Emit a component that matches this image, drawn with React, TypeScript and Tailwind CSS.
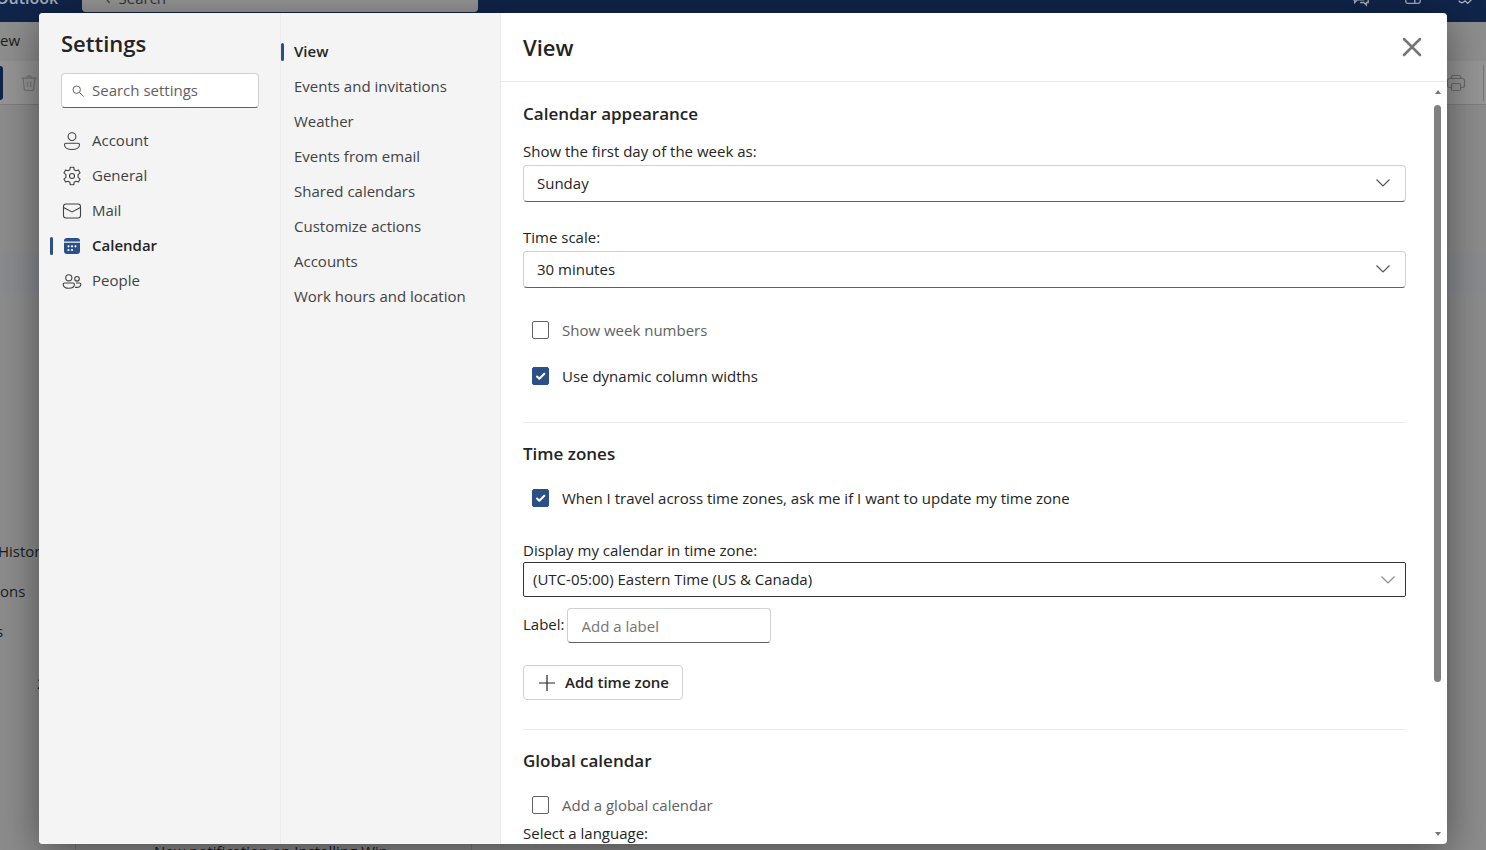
import { useState } from 'react'
import type { ReactNode } from 'react'
import clsx from 'clsx'

const sections = ['Account', 'General', 'Mail', 'Calendar', 'People']

const pages = [
  'View',
  'Events and invitations',
  'Weather',
  'Events from email',
  'Shared calendars',
  'Customize actions',
  'Accounts',
  'Work hours and location',
]

function SectionIcon({ name }: { name: string }) {
  const props = {
    viewBox: '0 0 20 20',
    className: 'w-5 h-5 shrink-0',
    fill: 'none',
    stroke: 'currentColor',
    strokeWidth: 1.1,
    'aria-hidden': true,
  }
  if (name === 'Account') {
    return (
      <svg {...props}>
        <circle cx="10" cy="5.6" r="3.9" />
        <path d="M4 12.2h12a1.5 1.5 0 0 1 1.5 1.5c0 2.9-3.2 4.8-7.5 4.8s-7.5-1.9-7.5-4.8A1.5 1.5 0 0 1 4 12.2z" />
      </svg>
    )
  }
  if (name === 'General') {
    return (
      <svg {...props} strokeLinejoin="round">
        <circle cx="10" cy="10" r="2.5" />
        <path d="M8.3 1.2h3.4l.5 2.6 1.7 1 2.5-.9 1.7 3-2 1.7v2.8l2 1.7-1.7 3-2.5-.9-1.7 1-.5 2.6H8.3l-.5-2.6-1.7-1-2.5.9-1.7-3 2-1.7V8.6l-2-1.7 1.7-3 2.5.9 1.7-1z" />
      </svg>
    )
  }
  if (name === 'Mail') {
    return (
      <svg {...props}>
        <rect x="1.5" y="3" width="17" height="14" rx="2.5" />
        <path d="M1.5 6.5 10 11l8.5-4.5" />
      </svg>
    )
  }
  if (name === 'Calendar') {
    return (
      <svg {...props} stroke="none">
        <path fill="#2b4f87" d="M2 5a3 3 0 0 1 3-3h10a3 3 0 0 1 3 3v.5H2zM2 6.700h16V15a3 3 0 0 1-3 3H5a3 3 0 0 1-3-3z" />
        <g fill="#fff">
          <circle cx="6.5" cy="10.3" r="1.1" />
          <circle cx="10" cy="10.3" r="1.1" />
          <circle cx="13.5" cy="10.3" r="1.1" />
          <circle cx="6.5" cy="14" r="1.1" />
          <circle cx="10" cy="14" r="1.1" />
        </g>
      </svg>
    )
  }
  return (
    <svg {...props}>
      <circle cx="6.8" cy="6.8" r="3.1" />
      <circle cx="15" cy="7.8" r="2.3" />
      <path d="M2.5 12h8.600a1.300 1.300 0 0 1 1.300 1.300c0 2.400-2.300 4-5.600 4s-5.600-1.600-5.600-4A1.300 1.300 0 0 1 2.500 12z" />
      <path d="M14 12h3.500a1.300 1.300 0 0 1 1.300 1.300c0 1.900-1.600 3.100-4.200 3.100-.6 0-1.100-.1-1.600-.2" />
    </svg>
  )
}

function SelectField({ id, label, value, outlined }: { id: string; label: string; value: string; outlined?: boolean }) {
  return (
    <div className={clsx('flex flex-col', outlined ? 'gap-0.5' : 'gap-1')}>
      <label htmlFor={id} className="leading-5">{label}</label>
      <div className="relative">
        <select
          id={id}
          className={clsx(
            'block w-full appearance-none bg-white',
            outlined
              ? 'h-[35px] px-[9px] border border-[#333] rounded-xs'
              : 'h-[37px] px-[13px] border border-[#d1d1d1] border-b-[#616161] rounded',
          )}
        >
          <option>{value}</option>
        </select>
        <svg
          viewBox="0 0 16 16"
          className={clsx(
            'absolute w-4 h-4 top-2.5 pointer-events-none',
            outlined ? 'right-2.5 text-[#8a8a8a]' : 'right-[15px] text-[#555]',
          )}
          fill="none"
          stroke="currentColor"
          strokeWidth="1.2"
          aria-hidden="true"
        >
          <path d="M1.5 4.5 8 11l6.5-6.5" />
        </svg>
      </div>
    </div>
  )
}

function CheckRow({ label, initial = false }: { label: string; initial?: boolean }) {
  const [checked, setChecked] = useState(initial)
  return (
    <label className={clsx('flex items-center h-9 gap-[13px] pl-[9px]', !checked && 'text-[#616161]')}>
      <span className="relative flex">
        <input
          type="checkbox"
          checked={checked}
          onChange={e => setChecked(e.target.checked)}
          className="w-[17px] h-[18px] appearance-none rounded-xs border border-[#616161] bg-white checked:bg-[#2b4f87] checked:border-[#2b4f87]"
        />
        {checked && (
          <svg viewBox="0 0 17 18" className="absolute inset-0 pointer-events-none" fill="none" stroke="#fff" strokeWidth="2" strokeLinecap="round" strokeLinejoin="round" aria-hidden="true">
            <path d="m5 9.5 2.300 2.300 5-5" />
          </svg>
        )}
      </span>
      {label}
    </label>
  )
}

function NavItem({ label, active, icon, onClick }: { label: string; active: boolean; icon?: ReactNode; onClick: () => void }) {
  return (
    <li className="flex items-center">
      <span className={clsx('w-[3px] h-[18px] rounded-sm', active && 'bg-[#2b4f87]')} />
      <button
        type="button"
        onClick={onClick}
        className={clsx(
          'flex items-center h-[35px] gap-2.5 text-left',
          icon ? 'pl-[9px]' : 'pl-2.5',
          active ? 'font-semibold text-[#242424]' : 'text-[#424242]',
        )}
      >
        {icon}
        {label}
      </button>
    </li>
  )
}

// Mailbox behind the dialog, already in its dimmed colours
function Backdrop() {
  return (
    <div className="h-full flex flex-col bg-[#8c8c8c] text-[#1c1c1c]" aria-hidden="true">
      <header className="h-12 -mt-[26px] shrink-0 flex items-center bg-[#10254a] text-[#a5adba]">
        <span className="w-[86px] shrink-0 -ml-1 text-base font-semibold">Outlook</span>
        <div className="w-[396px] h-7 flex items-center gap-2 pl-6 rounded-b bg-[#959595] text-[#333]">
          <span>‹</span>
          <span>Search</span>
        </div>
        <div className="ml-auto flex gap-[34px] pr-3">
          <svg viewBox="0 0 20 20" className="w-[18px] h-[18px]" fill="none" stroke="currentColor" strokeWidth="1.5">
            <path d="M2 3h11v9H6l-3 3v-3H2zM15 7h3v8h-2v3l-3-3H9" />
          </svg>
          <svg viewBox="0 0 20 20" className="w-[18px] h-[18px]" fill="none" stroke="currentColor" strokeWidth="1.5">
            <rect x="2" y="2" width="16" height="14" rx="2" />
            <path d="M12 16v-5h6" />
          </svg>
          <svg viewBox="0 0 20 20" className="w-[18px] h-[18px]" fill="none" stroke="currentColor" strokeWidth="1.5">
            <path d="M3 13c2 3 5 3 7 0M10 13l3 3 5-5M10 2v9" />
          </svg>
        </div>
      </header>
      <div className="h-[39px] shrink-0 leading-9 bg-[#8e8e8e]">ew</div>
      <div className="h-11 shrink-0 flex items-center justify-between bg-[#959595] border-b border-[#7c7c7c]">
        <div className="flex items-center gap-[17px]">
          <span className="w-[3px] h-[34px] rounded-r bg-[#10254a]" />
          <svg viewBox="0 0 20 20" className="w-[18px] h-5" fill="none" stroke="#747474" strokeWidth="1.3">
            <path d="M1.5 4.5h17M7.5 4.5a2.5 2.5 0 0 1 5 0M3.5 4.5l1.2 12a2 2 0 0 0 2 1.8h6.600a2 2 0 0 0 2-1.800l1.200-12M8.200 8.500v6M11.800 8.500v6" />
          </svg>
        </div>
        <div className="flex items-center gap-[17px]">
          <svg viewBox="0 0 20 20" className="w-5 h-5" fill="none" stroke="#6b6b6b" strokeWidth="1.2">
            <path d="M5.5 5.5V4A1.5 1.5 0 0 1 7 2.5h6A1.5 1.5 0 0 1 14.5 4v1.5M5.5 14.5h-2a2 2 0 0 1-2-2V8A2.5 2.5 0 0 1 4 5.5h12A2.5 2.5 0 0 1 18.5 8v4.5a2 2 0 0 1-2 2h-2" />
            <rect x="5.5" y="10.5" width="9" height="7" rx="1.5" />
          </svg>
          <span className="w-px h-9 mr-0.5 bg-[#777]" />
        </div>
      </div>
      <div className="flex-1 min-h-0 flex flex-col overflow-hidden">
        <div className="h-10 mt-[148px] shrink-0 bg-[#8a8b8f]" />
        <div className="mt-[238px] h-10 shrink-0 -ml-0.5 leading-10">History</div>
        <div className="h-10 shrink-0 leading-10">ons</div>
        <div className="h-10 shrink-0 -ml-1 leading-10">s</div>
        <div className="h-10 shrink-0 pl-[37px] mt-3 leading-10">2</div>
        <div className="mt-[136px] shrink-0 w-[397px] pl-[78px] ml-[75px] leading-6 border-x border-[#7a7a7a]">New notification on Installing Win</div>
      </div>
    </div>
  )
}

export default function App() {
  const [section, setSection] = useState('Calendar')
  const [page, setPage] = useState('View')

  return (
    <div className="relative h-screen overflow-hidden font-['Open_Sans',sans-serif] text-[15px] text-[#242424]">
      <Backdrop />

      <div className="absolute inset-0 flex px-[39px] pt-[13px] pb-1.5">
        <div role="dialog" aria-label="Settings" className="flex-1 min-w-0 flex overflow-hidden rounded bg-white shadow-[0_8px_40px_rgba(0,0,0,0.45)]">
          <nav className="w-[241px] shrink-0 bg-[#f4f4f4]">
            <h1 className="px-[22px] pt-3.5 text-[22px] leading-8 font-semibold">Settings</h1>
            <label className="flex items-center h-[35px] ml-[22px] mr-[21px] mt-3.5 pl-2.5 gap-2 bg-white border border-[#d1d1d1] border-b-[#616161] rounded">
              <svg viewBox="0 0 12 12" className="w-3 h-3 shrink-0" fill="none" stroke="#616161" strokeWidth="1" aria-hidden="true">
                <circle cx="4.7" cy="4.7" r="3.7" />
                <path d="m7.4 7.4 4.1 4.1" />
              </svg>
              <input type="text" aria-label="Search settings" placeholder="Search settings" className="w-full min-w-0 outline-none placeholder:text-[#616161]" />
            </label>
            <ul className="mt-[15px] pl-[11px]">
              {sections.map(s => (
                <NavItem key={s} label={s} active={s === section} icon={<SectionIcon name={s} />} onClick={() => setSection(s)} />
              ))}
            </ul>
          </nav>

          <nav className="w-[221px] shrink-0 pt-[21px] bg-[#f4f4f4] border-x border-[#ebebeb]">
            <ul>
              {pages.map(p => (
                <NavItem key={p} label={p} active={p === page} onClick={() => setPage(p)} />
              ))}
            </ul>
          </nav>

          <main className="flex-1 min-w-0 flex flex-col">
            <div className="flex items-center justify-between h-[69px] shrink-0 pl-[22px] pr-[25px] border-b border-[#ebebeb]">
              <h2 className="text-[22px] font-semibold">View</h2>
              <button type="button" aria-label="Close">
                <svg viewBox="0 0 20 20" className="w-5 h-5" fill="none" stroke="#757575" strokeWidth="2.5" strokeLinecap="round" aria-hidden="true">
                  <path d="m2 2 16 16M18 2 2 18" />
                </svg>
              </button>
            </div>

            <div className="flex-1 min-h-0 flex">
              <div className="flex-1 min-w-0 pt-[18px] px-[22px] overflow-y-auto [scrollbar-width:none]">
                <h3 className="text-[17px] leading-7 font-semibold">Calendar appearance</h3>
                <div className="flex flex-col gap-[25px] mt-[13px]">
                  <SelectField id="first-day" label="Show the first day of the week as:" value="Sunday" />
                  <SelectField id="time-scale" label="Time scale:" value="30 minutes" />
                </div>
                <div className="flex flex-col gap-2.5 mt-6">
                  <CheckRow label="Show week numbers" />
                  <CheckRow label="Use dynamic column widths" initial />
                </div>

                <hr className="mt-7 mb-[17px] border-[#ebebeb]" />

                <h3 className="mb-3 text-[17px] leading-7 font-semibold">Time zones</h3>
                <CheckRow label="When I travel across time zones, ask me if I want to update my time zone" initial />
                <div className="mt-6">
                  <SelectField id="zone" label="Display my calendar in time zone:" value="(UTC-05:00) Eastern Time (US & Canada)" outlined />
                </div>
                <div className="flex gap-0.5 mt-[11px]">
                  <label htmlFor="zone-label" className="leading-8">Label:</label>
                  <input
                    id="zone-label"
                    type="text"
                    placeholder="Add a label"
                    className="w-[204px] h-[35px] px-3.5 border border-[#d1d1d1] border-b-[#616161] rounded placeholder:text-[#757575]"
                  />
                </div>
                <button type="button" className="flex items-center h-[35px] gap-2 mt-[22px] px-[13px] border border-[#d1d1d1] rounded font-semibold">
                  <svg viewBox="0 0 20 20" className="w-5 h-5" stroke="currentColor" strokeWidth="1.2" aria-hidden="true">
                    <path d="M10 2v16M2 10h16" />
                  </svg>
                  Add time zone
                </button>

                <hr className="mt-[29px] mb-[17px] border-[#ebebeb]" />

                <h3 className="mb-3 text-[17px] leading-7 font-semibold">Global calendar</h3>
                <CheckRow label="Add a global calendar" />
                <p className="leading-5">Select a language:</p>
              </div>

              <div className="w-[19px] shrink-0 flex flex-col items-center py-2" aria-hidden="true">
                <svg viewBox="0 0 6 4" className="w-1.5 h-1"><path fill="#757575" d="M0 4 3 0l3 4z" /></svg>
                <div className="flex-1 w-full flex flex-col items-center pt-[11px] pb-1.5">
                  <div className="w-[7px] h-4/5 rounded-full bg-[#808080]" />
                </div>
                <svg viewBox="0 0 6 4" className="w-1.5 h-1"><path fill="#757575" d="m0 0 3 4 3-4z" /></svg>
              </div>
            </div>
          </main>
        </div>
      </div>
    </div>
  )
}
